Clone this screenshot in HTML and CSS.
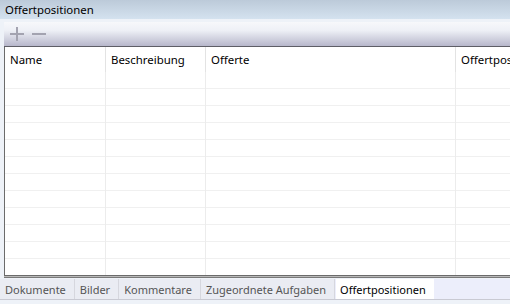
FILE: index.html
```html
<!DOCTYPE html>
<html lang="de">
<head>
  <meta charset="UTF-8" />
  <title>Offertpositionen</title>
  <link rel="stylesheet" href="styles.css">
</head>
<body>

  <div class="title-bar">Offertpositionen</div>

  <div class="panel">
    <div class="toolbar">
      <span class="tool" title="Hinzufügen">
        <svg width="14" height="14" viewBox="0 0 14 14"><path d="M7 0v14M0 7h14" stroke="#a3a3b0" stroke-width="2"/></svg>
      </span>
      <span class="tool" title="Entfernen">
        <svg width="14" height="14" viewBox="0 0 14 14"><path d="M0 7h14" stroke="#a3a3b0" stroke-width="2"/></svg>
      </span>
    </div>

    <div class="grid">
      <table>
        <thead>
          <tr>
            <th class="col-name">Name</th>
            <th class="col-desc">Beschreibung</th>
            <th class="col-offer">Offerte</th>
            <th>Offertpositionen</th>
          </tr>
        </thead>
        <tbody id="rows"></tbody>
      </table>
    </div>
  </div>

  <div class="tabs">
    <span class="tab">Dokumente</span>
    <span class="tab">Bilder</span>
    <span class="tab">Kommentare</span>
    <span class="tab">Zugeordnete Aufgaben</span>
    <span class="tab active">Offertpositionen</span>
  </div>

  <script>
    const tbody = document.getElementById("rows");
    for (let i = 0; i < 12; i++) {
      const row = document.createElement("tr");
      row.innerHTML = "<td></td><td></td><td></td><td></td>";
      tbody.appendChild(row);
    }
  </script>

</body>
</html>
```

FILE: styles.css
```css
body {
  font-family: 'Noto Sans', 'Segoe UI', sans-serif;
  font-size: 11.4px;
  margin: 0;
  color: #000;
  background: #eef2f8;
  width: 510px;
  height: 304px;
  overflow: hidden;
}

.title-bar {
  height: 19px;
  line-height: 19px;
  padding-left: 5px;
  background: linear-gradient(to bottom, #bccad9, #d4e2ef);
  white-space: nowrap;
}

.panel {
  padding: 3px 0 0 4px;
}

.toolbar {
  height: 24px;
  display: flex;
  align-items: center;
  gap: 8px;
  padding-left: 6px;
  background: linear-gradient(to bottom, #f7f8fb 0%, #eef0f6 35%, #b7b7cb 100%);
  border-bottom: 1px solid #5e5e66;
}

.tool {
  display: flex;
  width: 14px;
  height: 14px;
}

.grid {
  height: 228px;
  overflow: hidden;
  background: #fff;
  border-left: 1px solid #6b6b6b;
  border-bottom: 1px solid #6b6b6b;
  box-shadow: 0 1px 0 #b9b9b9, 0 2px 0 #7a7a7a;
}

table {
  border-collapse: collapse;
  table-layout: fixed;
  width: 560px;
}

th, td {
  padding: 0 5px;
  text-align: left;
  white-space: nowrap;
  overflow: hidden;
  border-right: 1px solid #ececec;
}

th {
  height: 24px;
  font-weight: normal;
  border-right-color: #e3e3e3;
}

td {
  height: 16px;
  border-top: 1px solid #f0f0f0;
}

tbody tr:first-child td {
  border-top-color: #fff;
}

.col-name { width: 90px; }
.col-desc { width: 89px; }
.col-offer { width: 239px; }

.tabs {
  margin-top: 3px;
  height: 20px;
  display: flex;
  font-size: 11px;
  background: #eceefb;
  border-bottom: 1px solid #c9cad3;
}

.tab {
  padding: 1px 8px 0 5px;
  line-height: 20px;
  color: #555;
  background: #eaecf3;
  border-right: 1px solid #d6d7de;
  white-space: nowrap;
}

.tab.active {
  margin-left: 1px;
  padding: 1px 8px 0 4px;
  color: #000;
  background: #fff;
  border: none;
}
```
